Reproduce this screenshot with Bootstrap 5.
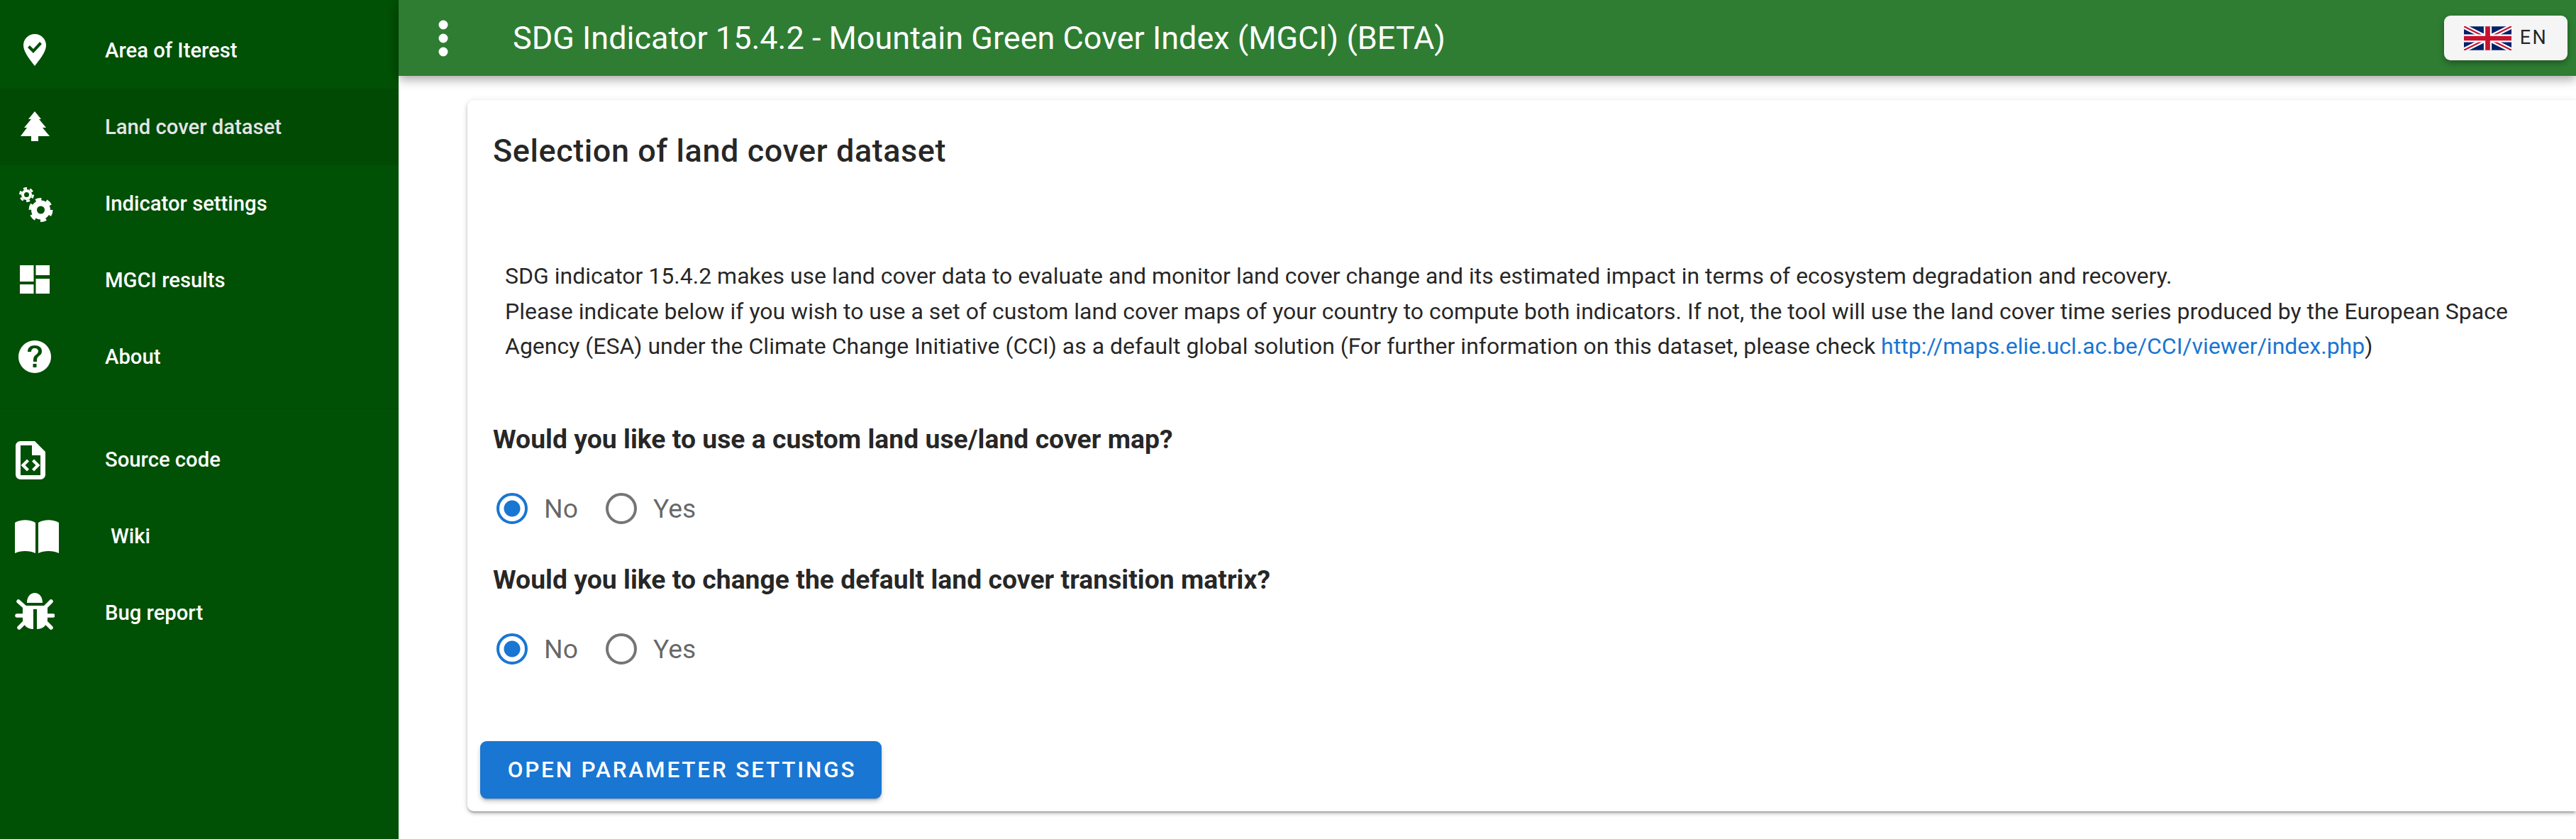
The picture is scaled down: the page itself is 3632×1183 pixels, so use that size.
<!DOCTYPE html>
<html lang="en"><head><meta charset="utf-8"><title>MGCI</title>
<link href="https://cdn.jsdelivr.net/npm/bootstrap@5.3.0/dist/css/bootstrap.min.css" rel="stylesheet">
<style>
html,body{height:100%;}
body{font-family:Roboto,"Liberation Sans",sans-serif;background:#fff;color:rgba(0,0,0,.87);overflow:hidden;}
.shell{height:1183px;}
.side{width:562px;flex:none;background:#005005;color:#fff;padding-top:17px;}
.side-item{height:108px;font-size:29.25px;font-weight:500;letter-spacing:0;color:#fff;padding-top:2px;}
.side-item.on{background:#004a04;color:#e4e4e4;}
.side-ico{width:148px;flex:none;position:relative;height:70px;margin-top:-2px;top:-1px;}
.side-ico svg{position:absolute;fill:#fff;}
.side-ico svg .leg{fill:none;stroke:#fff;stroke-width:5.500;stroke-linecap:round;}
.side-ico svg .ring{fill:none;stroke:#fff;}
.side-rule{height:1px;background:#004a04;margin:18px 0;}
.top{height:107px;background:#2e7d32;box-shadow:0 5px 14px rgba(0,0,0,.35);color:#fff;position:relative;z-index:2;}
.dots{width:26px;margin-left:50px;}
.apptitle{font-size:45px;font-weight:400;letter-spacing:0;margin-left:85px;line-height:1;}
.langbtn{width:174px;height:63px;background:#f5f5f5;border:0;border-radius:9px;box-shadow:0 4px 8px rgba(0,0,0,.3);margin-right:12px;color:rgba(0,0,0,.87);font-size:27px;letter-spacing:.09em;gap:12px;padding:0;}
.pane{flex:1 1 auto;min-width:0;}
.sheet{margin:34px 0 0 97px;height:1003px;border:0;border-radius:9px 0 0 9px;box-shadow:0 3px 3px -2px rgba(0,0,0,.3),0 3px 5px rgba(0,0,0,.2),0 1px 10px rgba(0,0,0,.1);padding:0 18px;}
.sheet-h{font-size:45px;font-weight:500;letter-spacing:.0125em;margin:0;padding:45px 0 0 18px;line-height:54px;}
.sheet-p{font-size:32px;line-height:49.5px;margin:0;padding:125px 20px 0 35px;}
.sheet-p a{color:#1976d2;text-decoration:none;}
.q{font-size:37.35px;font-weight:700;margin:0;line-height:54px;padding-left:18px;}
.q1{margin-top:78px;}
.q2{margin-top:46px;}
.radio{width:44px;height:44px;margin:0 23px;appearance:none;border:4.5px solid #757575;border-radius:50%;background:#fff;flex:none;}
.radio:checked{border-color:#1976d2;background:radial-gradient(circle,#1976d2 0 11px,#fff 12px);}
.radio-y{margin-left:0;}
.opt{font-size:37.35px;color:rgba(0,0,0,.6);margin-top:44px;line-height:54px;}
.opt-no{width:87px;}
.gowrap{margin-top:103.5px;}
.gobtn{background:#1976d2;border:0;color:#fff;height:81px;width:566px;font-size:31.5px;font-weight:500;letter-spacing:.0892857em;border-radius:9px;box-shadow:0 3px 3px -2px rgba(0,0,0,.3),0 4px 6px rgba(0,0,0,.2);text-transform:uppercase;padding:0 0 0 3px;}
</style></head><body>
<div class="shell d-flex">
<nav class="side">
<div class="side-item d-flex align-items-center"><span class="side-ico"><svg style="left:33px;top:13px" width="32" height="45" viewBox="0 0 32 45"><path fill-rule="evenodd" d="M16 0C7 0 0 7 0 16c0 10 11 22 16 29 5-7 16-19 16-29C32 7 25 0 16 0zM6 19l3-3 5 5 9-10 3 3-12 13z"/></svg></span>Area of Iterest</div>
<div class="side-item on d-flex align-items-center"><span class="side-ico"><svg style="left:29px;top:14px" width="41" height="42" viewBox="0 0 41 42"><path d="M20 0L29 11H26L36 23H31L41 35H25V42H15V35H0L9 23H5L15 11H11z"/></svg></span>Land cover dataset</div>
<div class="side-item d-flex align-items-center"><span class="side-ico"><svg style="left:26px;top:13px" width="50" height="50" viewBox="0 0 50 50"><circle class="ring" cx="11.500" cy="10.500" r="5.500" stroke-width="4"/><circle class="ring" cx="11.500" cy="10.500" r="9" stroke-width="3" stroke-dasharray="5 4.420"/><circle class="ring" cx="31.500" cy="32" r="9.500" stroke-width="8"/><circle class="ring" cx="31.500" cy="32" r="14.500" stroke-width="5" stroke-dasharray="8 7.180"/></svg></span>Indicator settings</div>
<div class="side-item d-flex align-items-center"><span class="side-ico"><svg style="left:28px;top:15px" width="42" height="40" viewBox="0 0 42 40"><path d="M0 0h19.500v23H0zM22.500 0h19.500v14H22.500zM22.500 19h19.500v21H22.500zM0 27h19.500v13H0z"/></svg></span>MGCI results</div>
<div class="side-item d-flex align-items-center"><span class="side-ico"><svg style="left:26px;top:13px" width="46" height="46" viewBox="0 0 46 46"><path fill-rule="evenodd" d="M23 0a23 23 0 100 46 23 23 0 000-46zM25.500 38h-5v-5h5zM30 21c-2 2-4 3-4 7v2h-5v-2c0-4 1-6 4-8 2-2 3-3 3-5 0-2-2-4-5-4s-5 2-5 5h-5c0-6 4-9 10-9s10 3 10 8c0 3-1 5-3 6z"/></svg></span>About</div>
<div class="side-rule"></div>
<div class="side-item d-flex align-items-center"><span class="side-ico"><svg style="left:22px;top:10px" width="42" height="54" viewBox="0 0 42 54"><path fill-rule="evenodd" d="M7 0H27L42 15V47c0 4-3 7-7 7H7c-4 0-7-3-7-7V7C0 3 3 0 7 0zM7 6V48H35V20H23V6zM16 25.500l3 3-5.500 5.500 5.500 5.500-3 3-8.500-8.500zM26 25.500l8.500 8.500-8.500 8.500-3-3 5.500-5.500-5.500-5.500z"/></svg></span>Source code</div>
<div class="side-item d-flex align-items-center"><span class="side-ico"><svg style="left:21px;top:13px" width="62" height="47" viewBox="0 0 62 47"><path d="M0 4C8-1 21-1 29 4V47C21 43 8 43 0 47zM33 4C41-1 54-1 62 4V47C54 43 41 43 33 47z"/></svg></span><span class="ms-2">Wiki</span></div>
<div class="side-item d-flex align-items-center"><span class="side-ico"><svg style="left:21px;top:7px" width="56" height="56" viewBox="0 0 56 56"><path d="M17 15C17 6 22 1 28 1S39 6 39 15zM11 19H46V38C46 46 40 52 31 52V24H26V52C17 52 11 46 11 38z"/><path class="leg" d="M5 13L14 21M51 13L43 21M3 33H12M45 33H54M6 50L13 43M51 50L44 43"/></svg></span>Bug report</div>
</nav>
<main class="pane">
<header class="top d-flex align-items-center justify-content-between">
<div class="d-flex align-items-center">
<svg class="dots" height="52" viewBox="0 0 14 52"><circle cx="7" cy="7" r="6.500" fill="#fff"/><circle cx="7" cy="26" r="6.500" fill="#fff"/><circle cx="7" cy="45" r="6.500" fill="#fff"/></svg>
<div class="apptitle">SDG Indicator 15.4.2 - Mountain Green Cover Index (MGCI) (BETA)</div>
</div>
<button class="langbtn d-flex align-items-center justify-content-center"><svg width="67" height="34" viewBox="0 0 60 30"><rect width="60" height="30" fill="#012169"/><path d="M0 0L60 30M60 0L0 30" stroke="#fff" stroke-width="6"/><path d="M0 0L60 30M60 0L0 30" stroke="#c8102e" stroke-width="2"/><path d="M30 0V30M0 15H60" stroke="#fff" stroke-width="10"/><path d="M30 0V30M0 15H60" stroke="#c8102e" stroke-width="6"/></svg><span>EN</span></button>
</header>
<section class="card sheet">
<h2 class="sheet-h">Selection of land cover dataset</h2>
<p class="sheet-p">SDG indicator 15.4.2 makes use land cover data to evaluate and monitor land cover change and its estimated impact in terms of ecosystem degradation and recovery.<br>Please indicate below if you wish to use a set of custom land cover maps of your country to compute both indicators. If not, the tool will use the land cover time series produced by the European Space Agency (ESA) under the Climate Change Initiative (CCI) as a default global solution (For further information on this dataset, please check <a href="#">http://maps.elie.ucl.ac.be/CCI/viewer/index.php</a>)</p>
<p class="q q1">Would you like to use a custom land use/land cover map?</p>
<div class="d-flex align-items-center opt"><input class="radio" type="radio" name="a" checked><span class="opt-no">No</span><input class="radio radio-y" type="radio" name="a"><span>Yes</span></div>
<p class="q q2">Would you like to change the default land cover transition matrix?</p>
<div class="d-flex align-items-center opt"><input class="radio" type="radio" name="b" checked><span class="opt-no">No</span><input class="radio radio-y" type="radio" name="b"><span>Yes</span></div>
<div class="gowrap"><button class="gobtn btn">Open parameter settings</button></div>
</section>
</main>
</div>
<script src="https://cdn.jsdelivr.net/npm/bootstrap@5.3.0/dist/js/bootstrap.bundle.min.js"></script>
</body></html>
